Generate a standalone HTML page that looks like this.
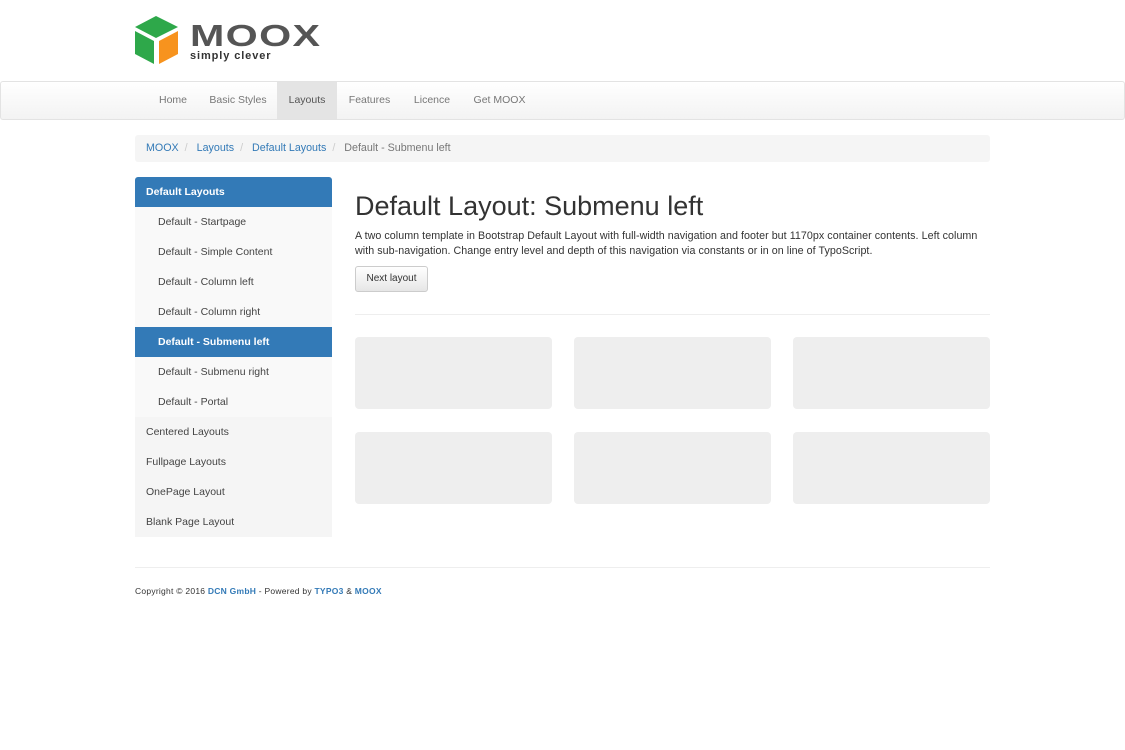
<!DOCTYPE html>
<html><head><meta charset="utf-8"><style>
*{box-sizing:border-box;margin:0;padding:0}
body{width:1125px;height:750px;background:#fff;font-family:"Liberation Sans",Arial,sans-serif;color:#333;font-size:11px;position:relative;overflow:hidden}
a{color:#337ab7;text-decoration:none}
.nav{position:absolute;left:0;top:81px;width:1125px;height:39px;border:1px solid #e3e3e3;border-radius:3px;background:linear-gradient(#fff,#f3f3f3)}
.nav span{position:absolute;top:0;height:37px;line-height:37px;color:#777;font-size:10.5px;text-align:center}
.bc{position:absolute;left:135px;top:135px;width:855px;height:27px;background:#f5f5f5;border-radius:3px;line-height:27px;padding-left:11px;font-size:10.7px}
.bc i{font-style:normal;color:#ccc;padding:0 6px}
.side{position:absolute;left:135px;top:177px;width:197px}
.side div{height:30px;line-height:30px;padding-left:11px;background:#f5f5f5;font-size:10.5px;color:#444}
.side .act{background:#337ab7;color:#fff;border-radius:3px 3px 0 0}
.side .sub{background:#f9f9f9;padding-left:23px}
.side .sub.act{background:#337ab7;color:#fff;border-radius:0;font-weight:bold}
h1{position:absolute;left:355px;top:191px;font-size:27px;font-weight:normal;color:#333}
.p{position:absolute;left:355px;top:229px;width:660px;line-height:15px;font-size:10.7px;white-space:nowrap;letter-spacing:.05px}
.btn{position:absolute;left:355px;top:266px;width:73px;height:26px;border:1px solid #ccc;border-radius:3px;background:linear-gradient(#fff,#e6e6e6);font-size:10px;line-height:24px;text-align:center}
.hr{position:absolute;left:355px;top:314px;width:635px;border-top:1px solid #eee}
.box{position:absolute;width:197px;height:72px;background:#eee;border-radius:4px}
.ft{position:absolute;left:135px;top:567px;width:855px;border-top:1px solid #eee;padding-top:18px;font-size:8.5px;color:#333;letter-spacing:.25px}
.ft b{color:#337ab7}
</style></head><body>
<svg style="position:absolute;left:135px;top:16px" width="43" height="48" viewBox="0 0 43 48">
<polygon points="21,0 43,11 21,22 0,11" fill="#2ea84a"/>
<polygon points="0,15 19,25 19,48 0,38" fill="#2ea84a"/>
<polygon points="43,15 24,25 24,48 43,38" fill="#f7931e"/>
</svg>
<div style="position:absolute;left:190px;top:20px;font-size:31px;line-height:31px;font-weight:bold;color:#555;letter-spacing:1px;transform:scaleX(1.33);transform-origin:left">MOOX</div>
<div style="position:absolute;left:190px;top:50px;font-size:11px;font-weight:bold;color:#333;letter-spacing:.9px">simply clever</div>
<div class="nav">
<span style="left:146px;width:52px">Home</span>
<span style="left:198px;width:78px">Basic Styles</span>
<span style="left:276px;width:60px;background:#e4e4e4;color:#555">Layouts</span>
<span style="left:336px;width:65px">Features</span>
<span style="left:401px;width:60px">Licence</span>
<span style="left:461px;width:75px">Get MOOX</span>
</div>
<div class="bc"><a>MOOX</a><i>/</i> <a>Layouts</a><i>/</i> <a>Default Layouts</a><i>/</i> <span style="color:#777">Default - Submenu left</span></div>
<div class="side">
<div class="act" style="font-weight:bold">Default Layouts</div>
<div class="sub">Default - Startpage</div>
<div class="sub">Default - Simple Content</div>
<div class="sub">Default - Column left</div>
<div class="sub">Default - Column right</div>
<div class="sub act">Default - Submenu left</div>
<div class="sub">Default - Submenu right</div>
<div class="sub">Default - Portal</div>
<div>Centered Layouts</div>
<div>Fullpage Layouts</div>
<div>OnePage Layout</div>
<div>Blank Page Layout</div>
</div>
<h1>Default Layout: Submenu left</h1>
<div class="p">A two column template in Bootstrap Default Layout with full-width navigation and footer but 1170px container contents. Left column<br>with sub-navigation. Change entry level and depth of this navigation via constants or in on line of TypoScript.</div>
<div class="btn">Next layout</div>
<div class="hr"></div>
<div class="box" style="left:355px;top:337px"></div>
<div class="box" style="left:574px;top:337px"></div>
<div class="box" style="left:793px;top:337px"></div>
<div class="box" style="left:355px;top:432px"></div>
<div class="box" style="left:574px;top:432px"></div>
<div class="box" style="left:793px;top:432px"></div>
<div class="ft">Copyright © 2016 <b>DCN GmbH</b> - Powered by <b>TYPO3</b> <span>&amp;</span> <b>MOOX</b></div>
</body></html>
